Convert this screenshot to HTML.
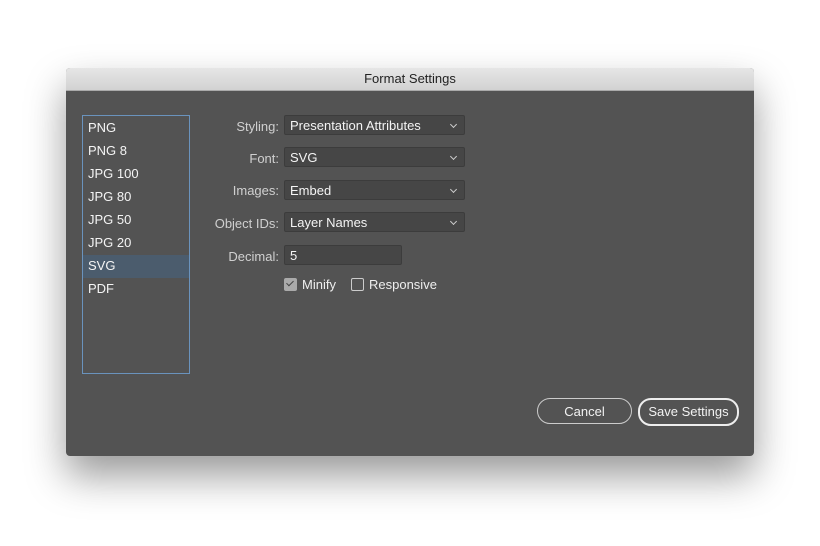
<!DOCTYPE html>
<html><head><style>
body{margin:0;width:820px;height:546px;background:#fff;position:relative;overflow:hidden;font-family:"Liberation Sans",sans-serif;}
.dlg{position:absolute;left:66px;top:68px;width:688px;height:388px;background:#535353;border-radius:4px;box-shadow:0 20px 40px rgba(0,0,0,.4);overflow:hidden}
.tb{height:22px;background:linear-gradient(#e6e6e6,#d2d2d2);border-bottom:1px solid #aaa;text-align:center;font-size:13px;line-height:22px;color:#222}
.list{position:absolute;left:16px;top:47px;width:106px;height:257px;border:1px solid #6a93bd;background:#535353}
.it{height:23px;line-height:22px;color:#f4f4f4;font-size:13px;padding-left:5px}
.sel{background:#4b5c6d}
.lbl{position:absolute;width:213px;text-align:right;color:#d0d0d0;font-size:13px}
.dd{position:absolute;left:218px;height:20px;background:#464646;border:1px solid #3c3c3c;border-radius:2px;color:#f4f4f4;font-size:13px;line-height:20px;padding-left:5px;box-sizing:border-box;width:181px}
.dd:after{content:"";position:absolute;right:8px;top:6px;width:4px;height:4px;border-right:1.3px solid #ccc;border-bottom:1.3px solid #ccc;transform:rotate(45deg)}
.dd.n:after{display:none}
.btn{position:absolute;top:330px;height:24px;border:1.5px solid #ddd;border-radius:13px;color:#f2f2f2;font-size:13px;text-align:center;line-height:25px}
.cb{position:absolute;width:11px;height:11px;border:1px solid #ccc;border-radius:2px}
</style></head><body>
<div class="dlg">
<div class="tb">Format Settings</div>
<div class="list">
<div class="it" style="margin-top:1px">PNG</div><div class="it">PNG 8</div><div class="it">JPG 100</div><div class="it">JPG 80</div><div class="it">JPG 50</div><div class="it">JPG 20</div><div class="it sel">SVG</div><div class="it">PDF</div>
</div>
<div class="lbl" style="top:51px">Styling:</div><div class="dd" style="top:47px">Presentation Attributes</div>
<div class="lbl" style="top:83px">Font:</div><div class="dd" style="top:79px">SVG</div>
<div class="lbl" style="top:115px">Images:</div><div class="dd" style="top:112px">Embed</div>
<div class="lbl" style="top:148px">Object IDs:</div><div class="dd" style="top:144px">Layer Names</div>
<div class="lbl" style="top:181px">Decimal:</div><div class="dd n" style="top:177px;width:118px">5</div>
<div class="cb" style="left:218px;top:210px;background:#aaa;border-color:#aaa"><span style="position:absolute;left:3px;top:0px;width:3px;height:6px;border-right:1.5px solid #444;border-bottom:1.5px solid #444;transform:rotate(45deg)"></span></div>
<div style="position:absolute;left:236px;top:209px;color:#eee;font-size:13px">Minify</div>
<div class="cb" style="left:285px;top:210px"></div>
<div style="position:absolute;left:303px;top:209px;color:#eee;font-size:13px">Responsive</div>
<div class="btn" style="left:471px;width:93px;border-width:1px;border-color:#ccc">Cancel</div>
<div class="btn" style="left:572px;width:97px;border-width:2px;border-color:#eee;line-height:24px">Save Settings</div>
</div>
</body></html>
